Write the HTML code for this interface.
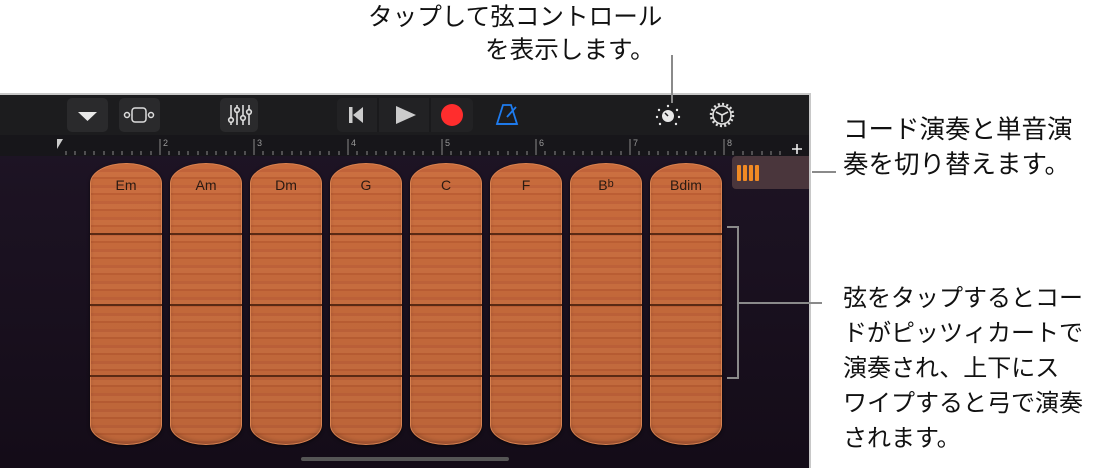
<!DOCTYPE html>
<html><head><meta charset="utf-8"><style>
*{margin:0;padding:0;box-sizing:border-box}
body{width:1107px;height:468px;background:#fff;position:relative;overflow:hidden;font-family:"Liberation Sans","Noto Sans CJK JP",sans-serif}
.t{position:absolute;font-size:24px;line-height:35px;color:#111;white-space:nowrap;font-family:"Liberation Sans","Noto Sans CJK JP",sans-serif}
#scr{position:absolute;left:0;top:93px;width:811px;height:375px;background:linear-gradient(180deg,#1f1526,#140c18);border-top:2px solid #c8c8c8;border-right:2px solid #c8c8c8;overflow:hidden}
#tb{position:absolute;left:0;top:0;width:100%;height:40px;background:#1c1c1e}
#ru{position:absolute;left:0;top:40px;width:100%;height:21px;background:#17161a}
.b{position:absolute;top:3px;height:34px;background:#2a2a2c;border-radius:5px}
.s{position:absolute;top:68px;width:72px;height:282px;border-radius:36px/20px;background:linear-gradient(180deg,rgba(0,0,0,0) 0%,rgba(0,0,0,.06) 100%),repeating-linear-gradient(180deg,#c86b3c 0 6px,#c1633a 6px 9px,#cb6f40 9px 14px,#bd5f34 14px 16px);box-shadow:inset 0 0 0 1px #d98250,inset 0 -3px 4px rgba(0,0,0,.2),0 1px 3px rgba(0,0,0,.6)}
.s span{position:absolute;top:14px;left:0;width:100%;text-align:center;font-size:14px;color:#2a1a12}
.s span small{font-size:11px;position:relative;top:-3px}
.s i{position:absolute;left:0;width:100%;height:2px;background:#5a2a14}
.ln{position:absolute;background:#8a8a8a}
</style></head><body>
<div class="t" style="left:368px;top:0px;font-size:24.6px">タップして弦コントロール</div>
<div class="t" style="left:485px;top:33px;font-size:24.6px">を表示します。</div>
<div class="t" style="left:843px;top:113px;font-size:25.5px">コード演奏と単音演</div>
<div class="t" style="left:843px;top:148px;font-size:25.5px">奏を切り替えます。</div>
<div class="t" style="left:843px;top:281px">弦をタップするとコー</div>
<div class="t" style="left:843px;top:316px">ドがピッツィカートで</div>
<div class="t" style="left:843px;top:351px">演奏され、上下にス</div>
<div class="t" style="left:843px;top:386px">ワイプすると弓で演奏</div>
<div class="t" style="left:843px;top:421px">されます。</div>
<div id="scr">
 <div id="tb">
  <div class="b" style="left:67px;width:41px"><svg width="41" height="34"><path d="M11 14h19l-9.5 9z" fill="#e8e8e8"/></svg></div>
  <div class="b" style="left:119px;width:41px"><svg width="41" height="34"><circle cx="8" cy="17" r="2.5" fill="none" stroke="#ddd" stroke-width="1.5"/><rect x="13" y="10" width="14" height="14" rx="3" fill="none" stroke="#ddd" stroke-width="1.5"/><circle cx="32" cy="17" r="2.5" fill="none" stroke="#ddd" stroke-width="1.5"/></svg></div>
  <div class="b" style="left:220px;width:38px"><svg width="38" height="34" stroke="#ddd" stroke-width="1.6" fill="none"><path d="M11 7v20M17 7v20M23 7v20M29 7v20"/><circle cx="11" cy="22" r="2.3" fill="#2a2a2c"/><circle cx="17" cy="12" r="2.3" fill="#2a2a2c"/><circle cx="23" cy="20" r="2.3" fill="#2a2a2c"/><circle cx="29" cy="14" r="2.3" fill="#2a2a2c"/></svg></div>
  <div class="b" style="left:337px;width:136px;background:#222224"><svg width="136" height="34"><rect x="12" y="9" width="3.5" height="16" fill="#ccc"/><path d="M16 17l10-8v16z" fill="#ccc"/><path d="M59 8l20 9-20 9z" fill="#ccc"/><path d="M41 0v34M93 0v34" stroke="#1a1a1c" stroke-width="2"/><circle cx="115" cy="17" r="11" fill="#ff2d2d"/></svg></div>
  <svg style="position:absolute;left:494px;top:6px" width="28" height="28" fill="none" stroke="#1e7cf0" stroke-width="1.8"><path d="M9 4h8l6 19H3z"/><path d="M3 23h20M13 16l9-10"/></svg>
  <svg style="position:absolute;left:654px;top:8px" width="28" height="26"><circle cx="14" cy="13" r="6" fill="#e8e8e8"/><path d="M14 13l-3-3" stroke="#1c1c1e" stroke-width="1.5"/><g fill="#e8e8e8"><circle cx="14" cy="3" r="1.2"/><circle cx="5" cy="7" r="1.2"/><circle cx="23" cy="7" r="1.2"/><circle cx="3" cy="14" r="1.2"/><circle cx="25" cy="14" r="1.2"/><circle cx="6" cy="21" r="1.2"/><circle cx="22" cy="21" r="1.2"/></g></svg>
  <svg style="position:absolute;left:708px;top:6px" width="28" height="28" fill="none" stroke="#e0e0e0" stroke-width="1.6"><circle cx="14" cy="14" r="9"/><path d="M14 14l-6-3M14 14l6-3M14 14v7"/><circle cx="14" cy="14" r="11" stroke-dasharray="2 2.3" stroke-width="2.5"/></svg>
 </div>
 <div id="ru"><svg width="811" height="21">
  <path d="M57 4h6l-6 10z" fill="#ccc"/>
  <g stroke="#888" stroke-width="1">
  <path d="M66 16v4M75 16v4M85 16v4M94 16v4M104 16v4M113 16v4M122 16v4M132 16v4M141 16v4M151 16v4M160 4v16M169 16v4M179 16v4M188 16v4M198 16v4M207 16v4M216 16v4M226 16v4M235 16v4M245 16v4M254 4v16M263 16v4M273 16v4M282 16v4M292 16v4M301 16v4M310 16v4M320 16v4M329 16v4M339 16v4M348 4v16M357 16v4M367 16v4M376 16v4M386 16v4M395 16v4M404 16v4M414 16v4M423 16v4M433 16v4M442 4v16M451 16v4M461 16v4M470 16v4M480 16v4M489 16v4M498 16v4M508 16v4M517 16v4M527 16v4M536 4v16M545 16v4M555 16v4M564 16v4M574 16v4M583 16v4M592 16v4M602 16v4M611 16v4M621 16v4M630 4v16M639 16v4M649 16v4M658 16v4M668 16v4M677 16v4M686 16v4M696 16v4M705 16v4M715 16v4M724 4v16M733 16v4M743 16v4M752 16v4M762 16v4M771 16v4M780 16v4"/></g>
  <g fill="#999" font-size="9" font-family="Liberation Sans"><text x="163" y="11">2</text><text x="257" y="11">3</text><text x="351" y="11">4</text><text x="445" y="11">5</text><text x="539" y="11">6</text><text x="633" y="11">7</text><text x="727" y="11">8</text></g>
  <path d="M792 14h10M797 9v10" stroke="#eee" stroke-width="1.6"/>
 </svg></div>
 <div style="position:absolute;left:732px;top:61px;width:80px;height:33px;background:#4a363c;border-radius:4px 0 0 4px"><svg width="40" height="33"><g fill="#f08a24"><rect x="5" y="9" width="4" height="16" rx="1"/><rect x="11" y="9" width="4" height="16" rx="1"/><rect x="17" y="9" width="4" height="16" rx="1"/><rect x="23" y="9" width="4" height="16" rx="1"/></g></svg></div>
 <div class="s" style="left:90px"><span>Em</span><i style="top:70px"></i><i style="top:141px"></i><i style="top:212px"></i></div>
 <div class="s" style="left:170px"><span>Am</span><i style="top:70px"></i><i style="top:141px"></i><i style="top:212px"></i></div>
 <div class="s" style="left:250px"><span>Dm</span><i style="top:70px"></i><i style="top:141px"></i><i style="top:212px"></i></div>
 <div class="s" style="left:330px"><span>G</span><i style="top:70px"></i><i style="top:141px"></i><i style="top:212px"></i></div>
 <div class="s" style="left:410px"><span>C</span><i style="top:70px"></i><i style="top:141px"></i><i style="top:212px"></i></div>
 <div class="s" style="left:490px"><span>F</span><i style="top:70px"></i><i style="top:141px"></i><i style="top:212px"></i></div>
 <div class="s" style="left:570px"><span>B<small>b</small></span><i style="top:70px"></i><i style="top:141px"></i><i style="top:212px"></i></div>
 <div class="s" style="left:650px"><span>Bdim</span><i style="top:70px"></i><i style="top:141px"></i><i style="top:212px"></i></div>
 <div style="position:absolute;left:301px;top:362px;width:208px;height:4px;border-radius:2px;background:#555"></div>
</div>
<div class="ln" style="left:671px;top:55px;width:2px;height:48px"></div>
<div class="ln" style="left:812px;top:171px;width:24px;height:2px"></div>
<div class="ln" style="left:727px;top:226px;width:11px;height:2px"></div>
<div class="ln" style="left:727px;top:377px;width:11px;height:2px"></div>
<div class="ln" style="left:737px;top:226px;width:2px;height:153px"></div>
<div class="ln" style="left:738px;top:302px;width:84px;height:2px"></div>
</body></html>
